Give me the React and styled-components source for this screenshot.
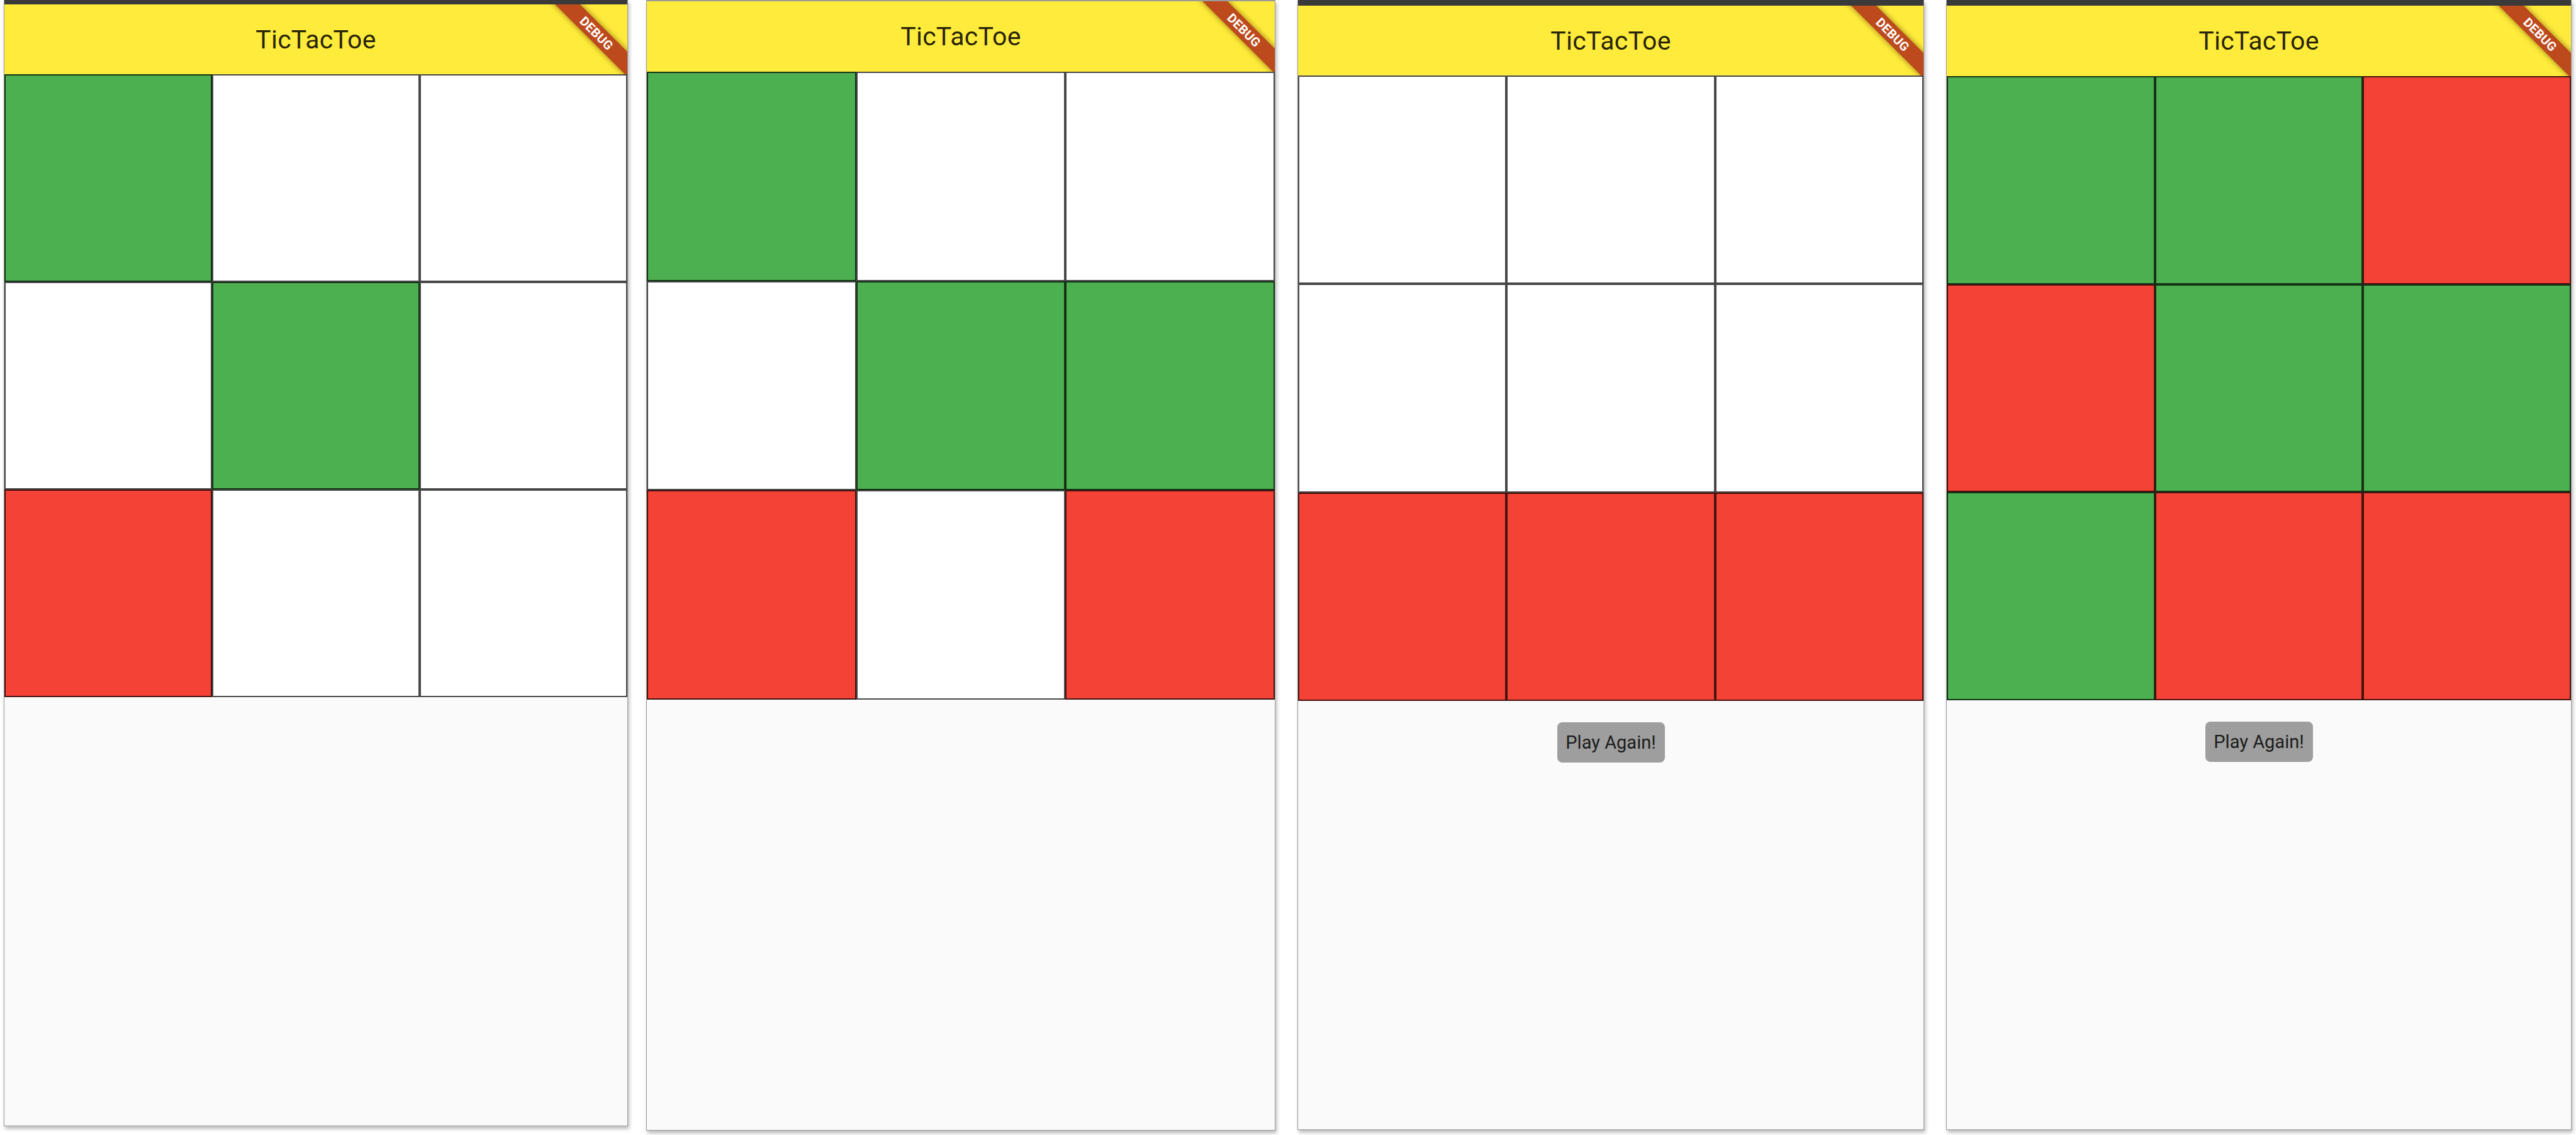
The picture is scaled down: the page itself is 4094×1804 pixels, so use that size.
import styled, { createGlobalStyle } from "styled-components";

const GlobalStyle = createGlobalStyle`
  html, body {
    margin: 0;
    padding: 0;
    background: #ffffff;
  }
  body {
    font-family: Roboto, "Noto Sans", "Liberation Sans", sans-serif;
  }
`;

const Screens = styled.div`
  display: flex;
  align-items: flex-start;
  padding-left: 6px;
  width: 4094px;
  height: 1804px;
  box-sizing: border-box;
  overflow: hidden;
`;

const Phone = styled.div`
  display: flex;
  flex-direction: column;
  box-sizing: border-box;
  width: ${(p) => p.$width}px;
  height: ${(p) => p.$height}px;
  margin-left: ${(p) => p.$gap}px;
  background: #fafafa;
  border: 1px solid #9a9a9a;
  border-top-width: ${(p) => (p.$status ? 0 : 2)}px;
  box-shadow: 2px 4px 6px rgba(0, 0, 0, 0.28);
  overflow: hidden;
`;

const StatusBar = styled.div`
  height: ${(p) => p.$height}px;
  background: #3a3a3a;
  flex-shrink: 0;
`;

const AppBar = styled.header`
  position: relative;
  display: flex;
  align-items: center;
  justify-content: center;
  height: ${(p) => p.$height}px;
  flex-shrink: 0;
  background: #ffeb3b;
  overflow: hidden;

  h1 {
    margin: 0;
    font-size: 41px;
    font-weight: 400;
    color: rgba(0, 0, 0, 0.87);
    letter-spacing: 0.2px;
  }
`;

const Ribbon = styled.div`
  position: absolute;
  top: 32px;
  right: -36px;
  width: 170px;
  height: 28px;
  display: flex;
  align-items: center;
  justify-content: center;
  background: #bd4a1d;
  color: #fff;
  font-family: Roboto, "Liberation Sans", sans-serif;
  font-weight: 700;
  font-size: 20px;
  letter-spacing: 0.3px;
  transform: rotate(45deg);
  box-shadow: 0 0 7px 2px rgba(90, 60, 0, 0.45);
`;

const Board = styled.div`
  display: grid;
  grid-template-columns: repeat(3, 1fr);
  flex-shrink: 0;
`;

const colors = {
  G: "#4caf50",
  R: "#f44336",
  W: "#ffffff",
};

const Cell = styled.div`
  aspect-ratio: 1 / 1;
  box-sizing: border-box;
  background: ${(p) => colors[p.$mark]};
  border: 2px solid rgba(0, 0, 0, 0.72);
`;

const Footer = styled.div`
  display: flex;
  justify-content: center;
  padding-top: 34px;
`;

const PlayButton = styled.button`
  width: 171px;
  height: 64px;
  border: none;
  border-radius: 8px;
  background: #9e9e9e;
  color: #1c1c1c;
  font-family: Roboto, "Liberation Sans", sans-serif;
  font-size: 29px;
  padding: 0;
`;

const screens = [
  { gap: 0, width: 992, height: 1790, status: 7, bar: 111, board: "GWWWGWRWW", done: false },
  { gap: 29, width: 1000, height: 1797, status: 0, bar: 112, board: "GWWWGGRWR", done: false },
  { gap: 35, width: 996, height: 1796, status: 9, bar: 111, board: "WWWWWWRRR", done: true },
  { gap: 35, width: 994, height: 1796, status: 9, bar: 112, board: "GGRRGGGRR", done: true },
];

const App = () => {
  return (
    <>
      <GlobalStyle />
      <Screens>
        {screens.map((s, i) => (
          <Phone key={i} $gap={s.gap} $width={s.width} $height={s.height} $status={s.status}>
            {s.status > 0 ? <StatusBar $height={s.status} /> : null}
            <AppBar $height={s.bar}>
              <h1>TicTacToe</h1>
              <Ribbon>DEBUG</Ribbon>
            </AppBar>
            <Board>
              {s.board.split("").map((mark, j) => (
                <Cell key={j} $mark={mark} />
              ))}
            </Board>
            {s.done ? (
              <Footer>
                <PlayButton>Play Again!</PlayButton>
              </Footer>
            ) : null}
          </Phone>
        ))}
      </Screens>
    </>
  );
};

export default App;
